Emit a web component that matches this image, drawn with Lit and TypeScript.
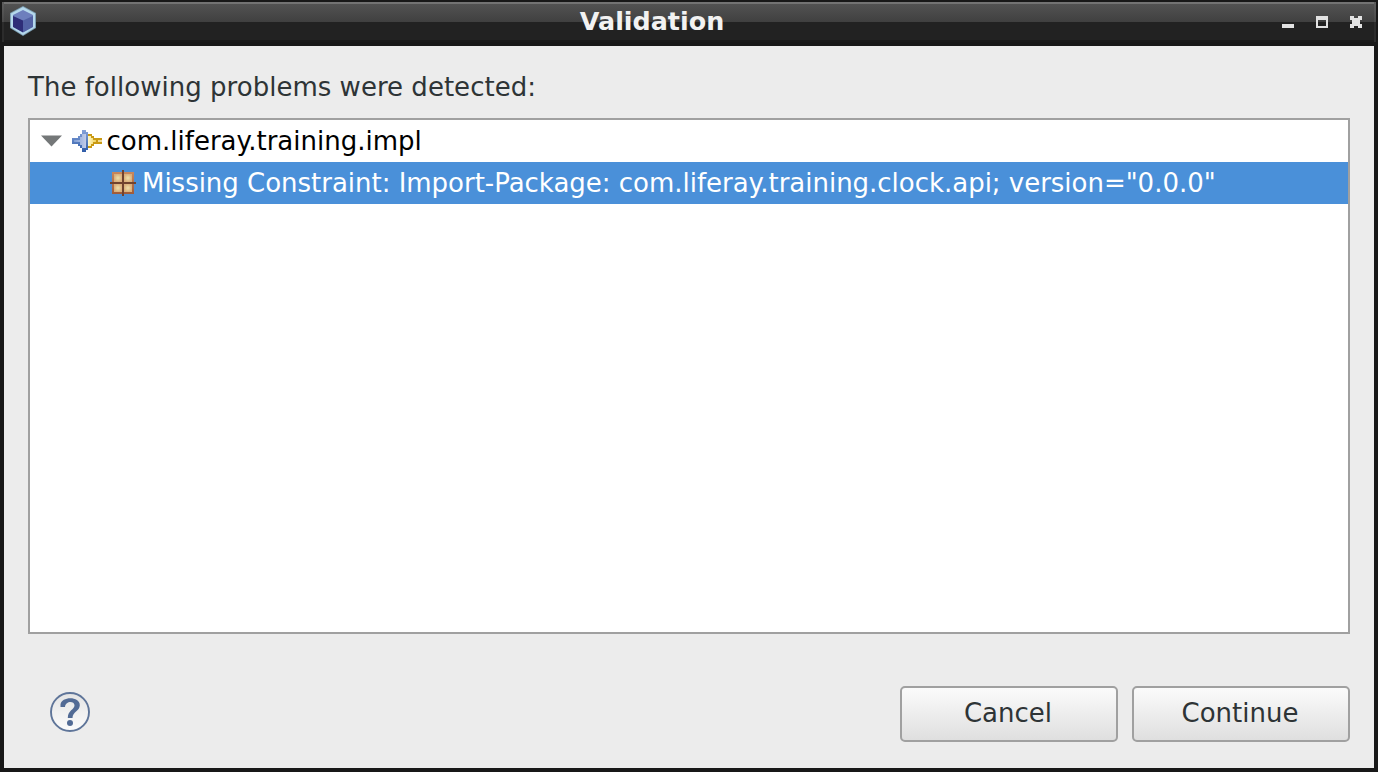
import { LitElement, html, css, svg } from "lit";
import { customElement } from "lit/decorators.js";

const cubeIcon = html`<svg class="cube" width="28" height="32" viewBox="0 0 28 32">
  <path d="M14 1L27 8V23L14 31L1 23V8Z" fill="#7d9fb3" />
  <path d="M14 2L26 8.500V22.500L14 30L2 22.500V8.500Z" fill="#b5d8ec" />
  <path d="M14 5L24 10V21.500L14 27L4 21.500V10Z" fill="#6d7fbd" />
  <path d="M4 11L14 15.500V27.500L4 22Z" fill="#2e2d78" />
  <path d="M14 15.500L24 11V22L14 27.500Z" fill="#5261a4" />
</svg>`;

const plugIcon = html`<svg class="plug" width="30" height="22" viewBox="0 0 30 22">
  <defs>
    <linearGradient id="b" x2="0" y2="1"><stop stop-color="#86a3da" /><stop offset="1" stop-color="#2e5ca8" /></linearGradient>
    <linearGradient id="s" x2="1" y2="0"><stop stop-color="#7c9cd4" /><stop offset="1" stop-color="#c2cdea" /></linearGradient>
    <linearGradient id="g" x2="1" y2="0"><stop stop-color="#fffbd0" /><stop offset="1" stop-color="#efcf58" /></linearGradient>
  </defs>
  <path d="M16 4H20V6H22V8H30V10H26V12H30V14H22V16H20V18H16Z" fill="#c99a14" />
  <path d="M16 6H19V8H21V10H24V12H21V14H19V16H16Z" fill="url(#g)" />
  <path d="M26 10H30V12H26Z" fill="#f2dc98" />
  <path d="M0 8H6V6H8V4H10V0H14V2H16V20H14V22H10V18H8V16H6V14H0Z" fill="url(#b)" />
  <path d="M2 10H8V7H10V4H14V18H10V15H8V12H2Z" fill="url(#s)" />
</svg>`;

const panes = [[4, 4], [14, 4], [4, 14], [14, 14]];
const packageIcon = html`<svg class="package" width="26" height="26" viewBox="0 0 26 26">
  <defs>
    <linearGradient id="p" x2="0" y2="1"><stop stop-color="#c9885c" /><stop offset="1" stop-color="#a05a38" /></linearGradient>
    <radialGradient id="w"><stop stop-color="#efe0aa" /><stop offset="1" stop-color="#d9b07c" /></radialGradient>
  </defs>
  <rect x="2" y="2" width="22" height="22" fill="url(#p)" />
  ${panes.map(([x, y]) => svg`<rect x=${x} y=${y} width="8" height="8" fill="url(#w)" />`)}
  <path d="M12 0H14V12H26V14H14V26H12V14H0V12H12Z" fill="#70432f" />
</svg>`;

const helpIcon = html`<svg class="help" width="40" height="40" viewBox="0 0 40 40">
  <defs><linearGradient id="h" x2="0" y2="1"><stop stop-color="#e4e4e4" /><stop offset="1" stop-color="#fcfcfc" /></linearGradient></defs>
  <circle cx="20" cy="20" r="19" fill="url(#h)" stroke="#5f7599" stroke-width="1.900" />
  <path d="M10.500 12.500C11.500 4 30 4 29.800 13.200C29.600 19.500 22.500 19.500 22.500 26H17.800C17.800 18 24.500 18 24.500 13.300C24.500 8.800 15.500 8.500 15 15H10.500Z" fill="#526b95" />
  <circle cx="20" cy="31" r="3" fill="#526b95" />
</svg>`;

@customElement("app-root")
export class AppRoot extends LitElement {
  static styles = css`
    :host {
      display: block;
      width: 1378px;
      height: 772px;
      overflow: hidden;
      font-family: "DejaVu Sans", sans-serif;
      font-size: 26px;
      color: #2e3436;
    }
    * { box-sizing: border-box; }
    svg { display: block; flex: none; }
    .window {
      height: 772px;
      background: #181818;
      padding: 2px 2px 4px;
      display: flex;
      flex-direction: column;
    }
    .frame {
      height: 40px;
      margin-bottom: 4px;
      padding: 0 2px;
      flex: none;
      background: linear-gradient(#5e5e5e, #484848 20px, #2c2c2c 20px);
    }
    .titlebar {
      height: 40px;
      display: grid;
      grid-template-columns: 86px 1fr 160px;
      align-items: center;
      background: linear-gradient(#737373 2px, #525252 2px, #404040 20px, #222 20px, #222 38px, #1a1a1a 38px);
    }
    .cube { margin: -2px 0 0 5px; }
    .title {
      text-align: center;
      font-weight: bold;
      font-size: 25.400px;
      line-height: 36px;
      padding-bottom: 2px;
      color: #f2f2f2;
    }
    .controls {
      display: flex;
      justify-content: flex-end;
      gap: 22px;
      padding-right: 12px;
    }
    .body {
      flex: 1;
      margin: 0 2px;
      background: #ececec;
      padding: 24px 24px 26px;
      display: flex;
      flex-direction: column;
    }
    .message {
      line-height: 34px;
      height: 48px;
      letter-spacing: 0.020px;
    }
    .tree {
      height: 516px;
      background: #fff;
      border: 2px solid #a0a0a0;
    }
    .row {
      height: 42px;
      display: flex;
      align-items: center;
      white-space: pre;
      color: #000;
    }
    .row span { line-height: 40px; padding-bottom: 0; }
    .parent { padding-left: 11px; }
    .plug { margin: 0 4.500px 0 10px; }
    .child {
      padding-left: 80px;
      background: #4a90d9;
      color: #fff;
      letter-spacing: -0.020px;
    }
    .package { margin-right: 6px; }
    .footer {
      margin-top: 52px;
      display: flex;
      align-items: center;
      gap: 14px;
      height: 56px;
    }
    .help { margin: -4px auto 0 22px; }
    .button {
      width: 218px;
      height: 56px;
      padding: 0 2px 3px 0;
      border: 2px solid #a0a0a0;
      border-radius: 5px;
      background: linear-gradient(#fbfbfb, #ededed 50%, #dfdfdf);
      font: inherit;
      color: inherit;
    }
  `;

  render() {
    return html`
      <div class="window">
        <div class="frame">
          <div class="titlebar">
            ${cubeIcon}
            <div class="title">Validation</div>
            <div class="controls">
              <svg width="12" height="12"><path d="M0 8H12V12H0Z" fill="#e2e2e2" /></svg>
              <svg width="12" height="12"><path d="M0 0H12V12H0ZM2 4V10H10V4Z" fill="#e2e2e2" fill-rule="evenodd" /></svg>
              <svg width="12" height="12"><path d="M0 0H4V2H8V0H12V4H10V8H12V12H8V10H4V12H0V8H2V4H0Z" fill="#e2e2e2" /></svg>
            </div>
          </div>
        </div>
        <div class="body">
          <div class="message">The following problems were detected:</div>
          <div class="tree">
            <div class="row parent">
              <svg width="21" height="12"><path d="M0 .5H21L10.500 11.500Z" fill="#747778" /></svg>
              ${plugIcon}<span>com.liferay.training.impl</span>
            </div>
            <div class="row child">
              ${packageIcon}<span>Missing Constraint: Import-Package: com.liferay.training.clock.api; version="0.0.0"</span>
            </div>
          </div>
          <div class="footer">
            ${helpIcon}
            <button class="button">Cancel</button>
            <button class="button">Continue</button>
          </div>
        </div>
      </div>
    `;
  }
}
